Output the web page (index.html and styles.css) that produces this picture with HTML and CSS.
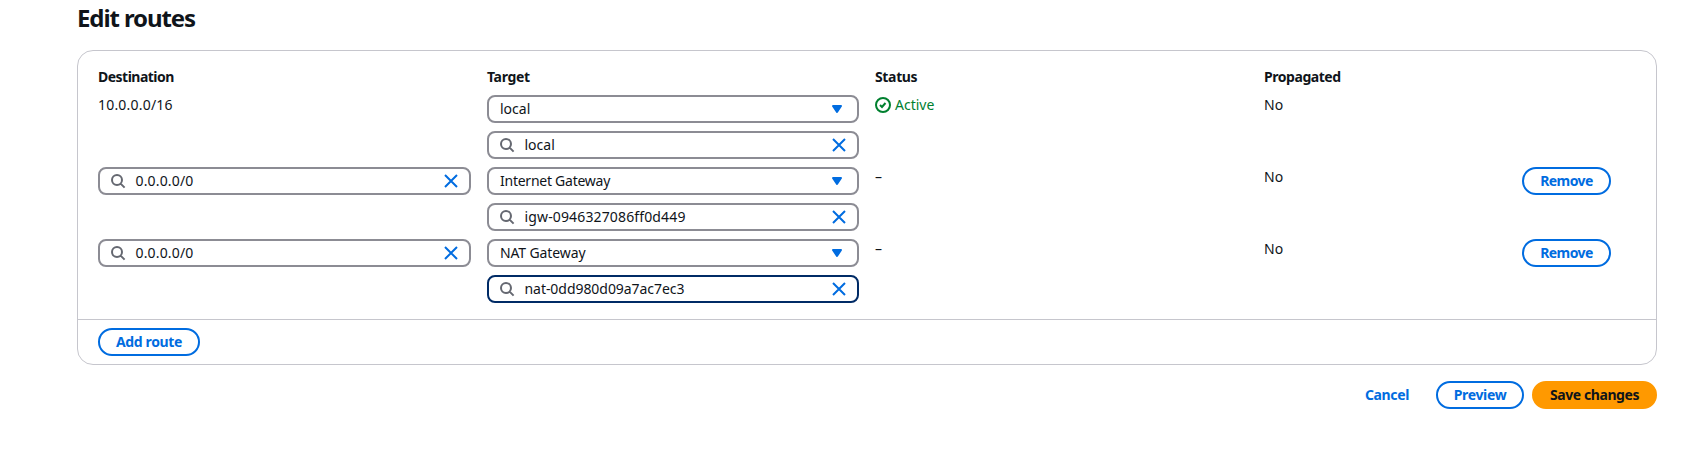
FILE: index.html
```html
<!DOCTYPE html>
<html lang="en">
<head>
<meta charset="utf-8">
<title>Edit routes</title>
<link rel="stylesheet" href="styles.css">
</head>
<body>
<svg class="defs" width="0" height="0" aria-hidden="true">
  <symbol id="search" viewBox="0 0 16 16"><path d="M7 12A5 5 0 1 0 7 2a5 5 0 0 0 0 10ZM10.6 10.6 14.6 14.6" fill="none" stroke="currentColor" stroke-width="2"/></symbol>
  <symbol id="close" viewBox="0 0 16 16"><path d="m2 2 12 12M14 2 2 14" fill="none" stroke="currentColor" stroke-width="2"/></symbol>
  <symbol id="caret" viewBox="0 0 16 16"><path d="M4 5h8l-4 6-4-6Z" fill="currentColor" stroke="currentColor" stroke-width="2" stroke-linejoin="round"/></symbol>
  <symbol id="check" viewBox="0 0 16 16"><circle cx="8" cy="8" r="7" fill="none" stroke="currentColor" stroke-width="2"/><path d="m5 8 2 2 3.5-4" fill="none" stroke="currentColor" stroke-width="2"/></symbol>
</svg>
<main class="page">
  <h1 class="title">Edit routes</h1>
  <section class="card">
    <div class="routes">
      <div class="row head">
        <div class="h-dest">Destination</div><div class="h-target">Target</div><div class="h-status">Status</div><div class="h-prop">Propagated</div>
      </div>
      <div class="row">
        <div class="cell t-cidr">10.0.0.0/16</div>
        <div class="stack">
          <div class="field select"><span class="value">local</span><svg class="icon caret"><use href="#caret"/></svg></div>
          <div class="field"><svg class="icon search"><use href="#search"/></svg><span class="value">local</span><svg class="icon close"><use href="#close"/></svg></div>
        </div>
        <div class="cell status"><svg class="icon"><use href="#check"/></svg><span>Active</span></div>
        <div class="cell">No</div>
      </div>
      <div class="row">
        <div class="field"><svg class="icon search"><use href="#search"/></svg><span class="value t-any">0.0.0.0/0</span><svg class="icon close"><use href="#close"/></svg></div>
        <div class="stack">
          <div class="field select"><span class="value t-igw">Internet Gateway</span><svg class="icon caret"><use href="#caret"/></svg></div>
          <div class="field"><svg class="icon search"><use href="#search"/></svg><span class="value t-igwid">igw-0946327086ff0d449</span><svg class="icon close"><use href="#close"/></svg></div>
        </div>
        <div class="cell">–</div>
        <div class="cell">No</div>
        <button class="btn remove">Remove</button>
      </div>
      <div class="row">
        <div class="field"><svg class="icon search"><use href="#search"/></svg><span class="value t-any">0.0.0.0/0</span><svg class="icon close"><use href="#close"/></svg></div>
        <div class="stack">
          <div class="field select"><span class="value t-nat">NAT Gateway</span><svg class="icon caret"><use href="#caret"/></svg></div>
          <div class="field focused"><svg class="icon search"><use href="#search"/></svg><span class="value t-natid">nat-0dd980d09a7ac7ec3</span><svg class="icon close"><use href="#close"/></svg></div>
        </div>
        <div class="cell">–</div>
        <div class="cell">No</div>
        <button class="btn remove">Remove</button>
      </div>
    </div>
    <div class="card-footer"><button class="btn add">Add route</button></div>
  </section>
  <div class="actions">
    <button class="btn link">Cancel</button>
    <button class="btn preview">Preview</button>
    <button class="btn primary">Save changes</button>
  </div>
</main>
</body>
</html>
```
FILE: styles.css
```css
* { box-sizing: border-box; }
body { margin: 0; background: #fff; color: #0f141a; font: 14px/20px "Noto Sans", "Open Sans", sans-serif; }
.defs { display: block; }
.page { padding: 3px 24px 0 77px; }
.title { margin: 0 0 17px; font-size: 24px; line-height: 30px; font-weight: 700; letter-spacing: -1.1px; white-space: nowrap; }
.card { height: 315px; border: 1px solid #c6c6cd; border-radius: 16px; }
.routes { height: 268px; padding: 16px 20px 0; display: flex; flex-direction: column; gap: 8px; }
.row { display: grid; grid-template-columns: 373px 372px 373px 242px 89px; column-gap: 16px; align-items: start; white-space: nowrap; }
.head { height: 20px; font-weight: 700; }
.h-dest { letter-spacing: -0.52px; }
.h-target, .h-status { letter-spacing: -0.35px; }
.h-prop { letter-spacing: -0.45px; }
.t-cidr { letter-spacing: 0.2px; }
.t-any { letter-spacing: 0.16px; }
.t-igw { letter-spacing: -0.25px; }
.t-igwid { letter-spacing: 0.14px; }
.t-nat { letter-spacing: -0.12px; }
.t-natid { letter-spacing: -0.05px; }
.stack { display: grid; gap: 8px; }
.field { height: 28px; border: 2px solid #8c8c94; border-radius: 8px; display: flex; align-items: center; padding: 0 10px; }
.select { padding-left: 11px; }
.focused { border-color: #002b66; }
.icon { width: 16px; height: 16px; flex: none; }
.search { color: #656871; margin-right: 9.5px; }
.close, .caret { color: #006ce0; margin-left: auto; }
.caret { margin-right: 2px; }
.status { display: flex; align-items: center; gap: 4px; color: #00802f; }
.btn { height: 28px; padding: 0; border: 2px solid #006ce0; border-radius: 20px; background: #fff; color: #006ce0; font: 700 14px/20px "Noto Sans", "Open Sans", sans-serif; letter-spacing: -0.35px; white-space: nowrap; }
.remove { letter-spacing: -0.55px; }
.card-footer { height: 45px; border-top: 1px solid #c6c6cd; padding: 8px 20px; }
.add { width: 102px; }
.actions { display: flex; justify-content: flex-end; gap: 8px; padding-top: 16px; }
.link { width: 84px; padding-left: 2px; border-color: transparent; }
.preview { width: 88px; }
.primary { width: 125px; background: #f90; border-color: #f90; color: #0f141a; letter-spacing: -0.42px; }
```
